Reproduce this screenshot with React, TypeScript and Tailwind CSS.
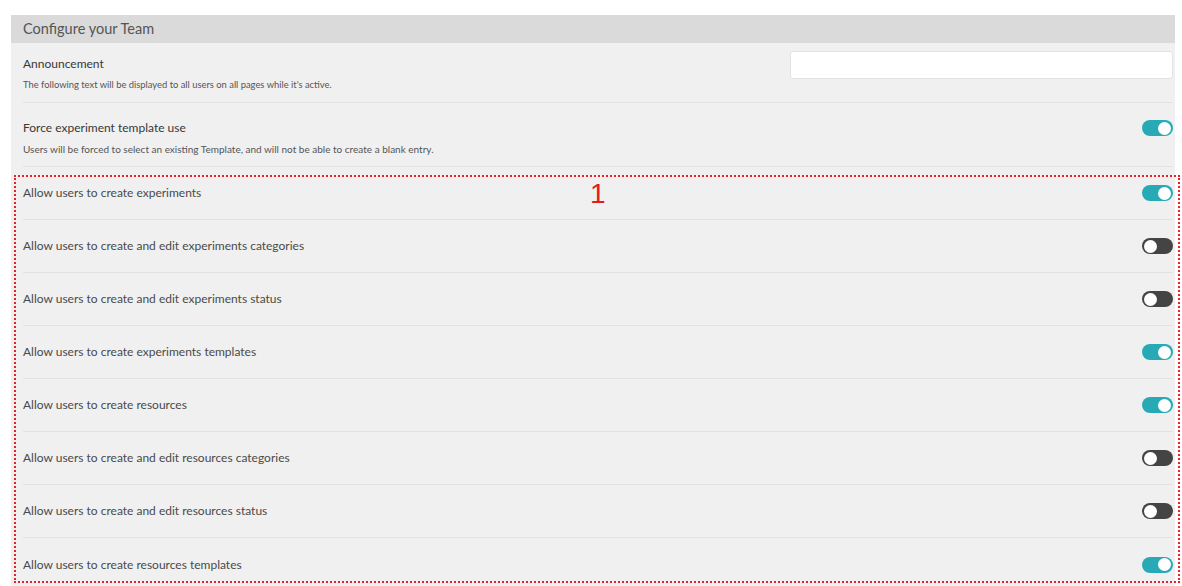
import React from "react";

type Setting = { label: string; on: boolean };

const permissions: Setting[] = [
  { label: "Allow users to create experiments", on: true },
  { label: "Allow users to create and edit experiments categories", on: false },
  { label: "Allow users to create and edit experiments status", on: false },
  { label: "Allow users to create experiments templates", on: true },
  { label: "Allow users to create resources", on: true },
  { label: "Allow users to create and edit resources categories", on: false },
  { label: "Allow users to create and edit resources status", on: false },
  { label: "Allow users to create resources templates", on: true },
];

function Toggle({ on }: { on: boolean }) {
  return (
    <div
      className={
        "flex h-[16px] w-[31px] shrink-0 items-center rounded-full px-[2px] " +
        (on ? "justify-end bg-[#27aab6]" : "justify-start bg-[#444]")
      }
    >
      <div className="h-[13px] w-[13px] rounded-full bg-white" />
    </div>
  );
}

export default function App() {
  return (
    <div
      className="min-h-screen bg-white pt-[15px] pl-[11px] text-[#444]"
      style={{ fontFamily: "Lato, 'Open Sans', sans-serif" }}
    >
      <div className="w-[1164px] bg-[#f0f0f0]">
        <div className="flex h-[28px] items-center bg-[#dadada] px-[12px] text-[14.5px] text-[#555]">
          Configure your Team
        </div>

        <div className="pl-[12px] pr-[2px]">
          <div className="flex items-start justify-between border-b border-[#e2e2e2] pt-[8px] pb-[12px]">
            <div className="pt-[5px]">
              <div className="text-[12px] leading-[16px] text-[#383838]">Announcement</div>
              <div className="mt-[8px] text-[9.4px] leading-[10px] text-[#555]">
                The following text will be displayed to all users on all pages while it's active.
              </div>
            </div>
            <input
              className="h-[28px] w-[383px] rounded-[3px] border border-[#e4e4e4] bg-white outline-none"
              type="text"
            />
          </div>

          <div className="flex items-start justify-between border-b border-[#e2e2e2] pt-[17px] pb-[12px]">
            <div>
              <div className="text-[12px] leading-[16px] text-[#383838]">Force experiment template use</div>
              <div className="mt-[8px] text-[10px] leading-[10px] text-[#555]">
                Users will be forced to select an existing Template, and will not be able to create a blank entry.
              </div>
            </div>
            <Toggle on />
          </div>

          <div className="relative">
            {/* highlight frame drawn over the permission rows */}
            <div className="pointer-events-none absolute top-[8px] left-[-9px] right-[-7px] h-[408px] border-2 border-dotted border-[#e8202a]" />
            <span
              className="absolute left-[567px] top-[12px] text-[28px] leading-[30px] text-[#e41b1b]"
              style={{ fontFamily: "'Liberation Sans', Arial, sans-serif" }}
            >
              1
            </span>
            {permissions.map((p, i) => (
              <div
                key={p.label}
                className={
                  "flex h-[53px] items-center justify-between " +
                  (i < permissions.length - 1 ? "border-b border-[#e2e2e2]" : "")
                }
              >
                <span className="text-[12px] text-[#4a4a4a]">{p.label}</span>
                <Toggle on={p.on} />
              </div>
            ))}
          </div>
        </div>
      </div>
    </div>
  );
}
